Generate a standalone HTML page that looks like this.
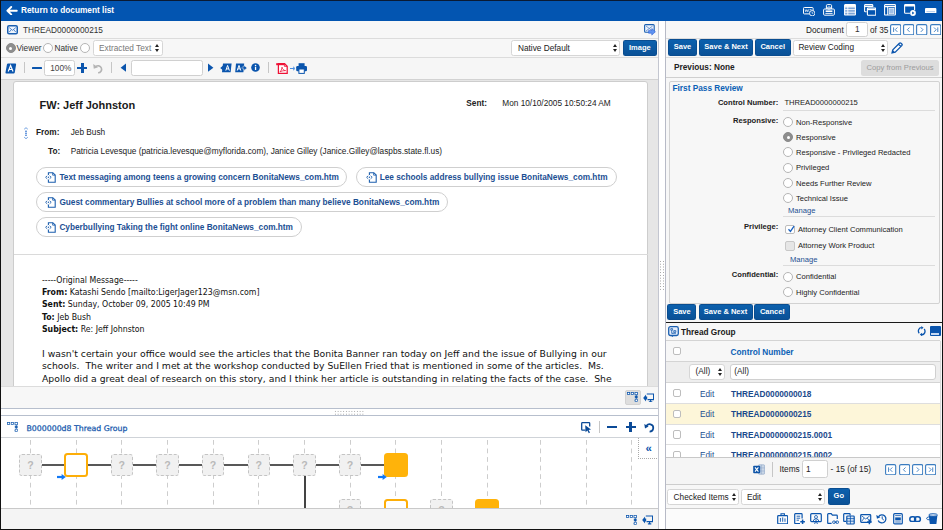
<!DOCTYPE html>
<html lang="en">
<head>
<meta charset="utf-8">
<title>Document Review</title>
<style>
*{box-sizing:border-box;margin:0;padding:0}
html,body{width:943px;height:530px;overflow:hidden;background:#f5f5f5}
body{font-family:"Liberation Sans",Arial,sans-serif;font-size:8.27px;color:#333;position:relative}
.abs{position:absolute}
#frame{position:absolute;left:0;top:0;width:943px;height:530px;overflow:hidden;background:#fff}
#topbar{left:0;top:0;width:943px;height:21px;background:#0355b1;border-top:1px solid #0a1a33}
#topbar .ttl{left:21px;top:4.2px;color:#fff;font-weight:bold;font-size:8.3px;white-space:nowrap}
.t{position:absolute;white-space:nowrap}
.btn{position:absolute;background:linear-gradient(#0c60ad,#0a5197);color:#fff;font-weight:bold;font-size:7.5px;text-align:center;border-radius:1.6px;border:1px solid #0a4d90;white-space:nowrap}
.sel{position:absolute;background:#fff;border:1px solid #d6d6d6;border-radius:2.5px;white-space:nowrap}
.inp{position:absolute;background:#fff;border:1px solid #d0d0d0;border-radius:2.5px}
.radio{position:absolute;width:10px;height:10px;border-radius:50%;border:1px solid #b5b5b5;background:#fff}
.radio.on{background:#8e8e8e;border-color:#8a8a8a}
.radio.on:after{content:"";position:absolute;left:2.5px;top:2.5px;width:3px;height:3px;border-radius:50%;background:#fff}
.cb{position:absolute;width:8.4px;height:8.4px;border:1px solid #bdbdbd;border-radius:2px;background:#fff}
.vsep{width:1px;background:#c6c6c6}
.upd{position:absolute;width:4.4px;height:8px}
.upd:before{content:"";position:absolute;left:0;top:0;border:2.2px solid transparent;border-bottom:3.3px solid #222;border-top:0}
.upd:after{content:"";position:absolute;left:0;top:4.5px;border:2.2px solid transparent;border-top:3.3px solid #222;border-bottom:0}
.b{font-weight:bold;color:#222}
.pill{position:absolute;height:20.2px;border:1px solid #cfcfcf;border-radius:10px;background:#fff;color:#1c4f93;font-weight:bold}
.om{position:absolute;white-space:nowrap;font-family:"DejaVu Sans Condensed","DejaVu Sans",sans-serif;font-size:8.7px;line-height:12.3px;color:#111}
.bd{position:absolute;white-space:nowrap;font-family:"DejaVu Sans",Verdana,sans-serif;font-size:9.29px;line-height:12.3px;color:#111}
.vd{position:absolute;top:24.7px;width:1px;height:72px;background-image:linear-gradient(#cdcdcd 55%,transparent 55%);background-size:1px 8.55px}
.nq{position:absolute;width:22.4px;height:22.4px;border:1px dashed #c4c4c4;border-radius:3px;background:#f1f1f1;color:#b9b9b9;font-weight:bold;font-size:10.6px;text-align:center;line-height:21px}
.no{position:absolute;width:23.8px;height:23.8px;border:2.2px solid #fdae08;border-radius:3.5px;background:#fff}
.nf{position:absolute;width:23.8px;height:23.8px;border-radius:3.5px;background:#ffb30a}
.f{font-size:7.6px}
</style>
</head>
<body>
<div id="frame">
<div id="topbar" class="abs"><svg class="abs" style="left:6.2px;top:4.8px" width="12" height="9.4" viewBox="0 0 12 9.4"><path d="M5.2 1 L1.4 4.7 L5.2 8.4 M1.4 4.7 H10.8" fill="none" stroke="#fff" stroke-width="1.9" stroke-linecap="round" stroke-linejoin="round"/></svg><div class="t ttl">Return to document list</div><svg class="abs" style="left:803.2px;top:6px" width="12" height="9" viewBox="0 0 12 9"><rect x=".5" y=".5" width="9.6" height="6.4" rx=".8" fill="none" stroke="#fff" stroke-width="1"/><path d="M2 2.4 L2.8 4.8 L3.8 2.6 L4.8 4.8 L5.6 2.4 M6.6 2.6 H8.6 M6.6 4.4 H8" fill="none" stroke="#fff" stroke-width=".7"/><circle cx="9.2" cy="6.2" r="2.7" fill="#0355b1" stroke="#fff" stroke-width=".9"/><path d="M9.2 4.8 V6.3 H10.3" fill="none" stroke="#fff" stroke-width=".7"/></svg><svg class="abs" style="left:823.2px;top:2.6px" width="12" height="12" viewBox="0 0 12 12"><path d="M3.4 5 V1.6 Q3.4 .6 4.4 .6 H7.6 Q8.6 .6 8.6 1.6 V5" fill="none" stroke="#fff" stroke-width="1"/><rect x=".6" y="5" width="10.8" height="6.2" rx="1" fill="none" stroke="#fff" stroke-width="1"/><path d="M2.4 9.4 H9.6 M4.8 3 H7.2 V5 H4.8Z" stroke="#fff" stroke-width=".9" fill="none"/><rect x="2.6" y="6.4" width="6.8" height="1.6" fill="#fff"/></svg><svg class="abs" style="left:844px;top:3.2px" width="12" height="12" viewBox="0 0 12 12"><rect x=".6" y=".6" width="10.8" height="10.4" rx=".6" fill="#7fa6d8" stroke="#fff" stroke-width="1.1"/><path d="M.6 3 H11.4 M.6 5.6 H11.4 M.6 8.2 H11.4 M3.8 .6 V11" stroke="#fff" stroke-width=".9"/><rect x="1" y="1" width="10" height="1.8" fill="#fff"/></svg><svg class="abs" style="left:863.8px;top:3.2px" width="12.4" height="12" viewBox="0 0 12.4 12"><path d="M2.6 7.8 H1.4 Q.6 7.8 .6 7 V1.4 Q.6 .6 1.4 .6 H8 Q8.8 .6 8.8 1.4 V3" fill="none" stroke="#fff" stroke-width="1.1"/><path d="M.6 2.4 H8.8" stroke="#fff" stroke-width="1.4"/><rect x="3.4" y="4" width="8.4" height="7.2" rx=".8" fill="#0355b1" stroke="#fff" stroke-width="1.1"/><path d="M3.4 5.4 H11.8" stroke="#fff" stroke-width="1.6"/></svg><svg class="abs" style="left:884px;top:3.2px" width="12" height="12" viewBox="0 0 12 12"><rect x=".6" y=".6" width="10.8" height="10.4" rx=".6" fill="none" stroke="#fff" stroke-width="1.1"/><path d="M.6 2.6 H11.4" stroke="#fff" stroke-width="1.3"/><path d="M3.6 2.6 V11" stroke="#fff" stroke-width=".9"/><rect x="5" y="4.4" width="5" height="5.4" fill="#9fbfe6" stroke="#fff" stroke-width=".7"/></svg><svg class="abs" style="left:904.4px;top:3.2px" width="12.4" height="12.4" viewBox="0 0 12.4 12.4"><path d="M6 9.2 H1.4 Q.6 9.2 .6 8.4 V1.4 Q.6 .6 1.4 .6 H9.8 Q10.6 .6 10.6 1.4 V6" fill="none" stroke="#fff" stroke-width="1.1"/><path d="M.6 1.6 H10.6" stroke="#fff" stroke-width="1.8"/><circle cx="9" cy="9" r="2.9" fill="#fff"/><path d="M8.2 7.6 L10.4 9 L8.2 10.4Z" fill="#0355b1"/></svg><svg class="abs" style="left:925.2px;top:6.6px" width="11.4" height="5.6" viewBox="0 0 11.4 5.6"><rect x="0" y="0" width="11.4" height="5.4" rx="1" fill="#fff"/><rect x="1.4" y="3" width="8.6" height="1.2" fill="#b9d0ee"/></svg></div>
<div id="left" class="abs" style="left:1px;top:21px;width:658px;height:508px;background:#f6f6f6;border-right:1px solid #c3c6d0">
  <div class="abs" style="left:0;top:0;width:657px;height:18px;border-bottom:1px solid #dcdcdc;background:#f7f7f7"></div>
  <svg class="abs" style="left:6px;top:4px" width="11" height="10" viewBox="0 0 11 10"><rect x="0.75" y="0.75" width="9.5" height="8.1" rx="1.3" fill="#eef4fc" stroke="#1a5fb0" stroke-width="1.5"/><path d="M2.2 2.6 L5.5 5.3 L8.8 2.6 M2.2 7.1 L4.4 4.6 M8.8 7.1 L6.6 4.6" fill="none" stroke="#3d78c4" stroke-width="0.9"/></svg>
  <div class="t" style="left:22px;top:4.7px;color:#333">THREAD0000000215</div>
  <svg class="abs" style="left:642.8px;top:3px" width="12" height="12" viewBox="0 0 12 12"><rect x="0.6" y="0.6" width="9.6" height="7.6" rx="1" fill="#eaf1fb" stroke="#1a5fb0" stroke-width="1.1"/><path d="M2 2 L8.6 7 M8.6 2 L2 7" stroke="#5a86c5" stroke-width="0.8" fill="none"/><path d="M4.6 6.4 h3.2 v-1.9 l3.6 3.3 l-3.6 3.3 v-1.9 h-3.2z" fill="#5f93f2" stroke="#2f62d4" stroke-width="0.6"/></svg>

  <div class="abs" style="left:0;top:18px;width:657px;height:19px;border-bottom:1px solid #dcdcdc;background:#f7f7f7"></div>
  <div class="radio on" style="left:4.5px;top:22.2px"></div>
  <div class="t" style="left:15.4px;top:23px">Viewer</div>
  <div class="radio" style="left:42.2px;top:22.2px"></div>
  <div class="t" style="left:53.5px;top:23px">Native</div>
  <div class="radio" style="left:79.2px;top:22.2px"></div>
  <div class="sel" style="left:92px;top:19.3px;width:70px;height:15.8px"><span class="t" style="left:5px;top:2.6px;color:#777">Extracted Text</span><span class="upd" style="right:2.4px;top:3.2px"></span></div>
  <div class="sel" style="left:510px;top:19.3px;width:109px;height:15.8px"><span class="t" style="left:6px;top:2.6px;color:#222">Native Default</span><span class="upd" style="right:2px;top:3.2px"></span></div>
  <div class="btn" style="left:622px;top:18.9px;width:33.6px;height:16.6px;line-height:14.6px">Image</div>

  <div class="abs" style="left:0;top:37px;width:657px;height:21.6px;border-bottom:1px solid #d2d2d2;background:#f6f6f6"></div>
  <svg class="abs" style="left:4.2px;top:42px" width="11.6" height="11" viewBox="0 0 12 11"><path d="M3.2 0.3 H10.6 Q11.7 0.3 11.5 1.4 L10.1 9.7 Q9.9 10.7 8.9 10.7 H1.4 Q0.3 10.7 0.5 9.6 L2 1.3 Q2.2 0.3 3.2 0.3 Z" fill="#0b55ad"/><path d="M3.3 8.6 L5.8 2.4 L8.3 8.6 M4.2 6.5 H7.4" fill="none" stroke="#fff" stroke-width="1.2"/></svg>
  <div class="abs vsep" style="left:23px;top:41.4px;height:10.4px"></div>
  <div class="abs" style="left:31px;top:45.5px;width:9.8px;height:2.9px;background:#0b55ad;border-radius:.5px"></div>
  <div class="inp" style="left:43.2px;top:39px;width:30.4px;height:15.6px"><span class="t" style="left:5px;top:3.2px;color:#444">100%</span></div>
  <div class="abs" style="left:76.4px;top:45.5px;width:10px;height:2.7px;background:#0b55ad"></div>
  <div class="abs" style="left:80.05px;top:41.85px;width:2.7px;height:10px;background:#0b55ad"></div>
  <svg class="abs" style="left:91.5px;top:41.8px" width="11" height="11" viewBox="0 0 10 10"><path d="M2.4 3.4 A3.2 3.2 0 1 1 4.6 8.9" fill="none" stroke="#b4b4b4" stroke-width="1.5"/><path d="M0.2 0.8 L0.7 5.2 L4.6 3.9 Z" fill="#b4b4b4"/></svg>
  <div class="abs vsep" style="left:109.5px;top:41.4px;height:10.4px"></div>
  <svg class="abs" style="left:119.3px;top:42.3px" width="7" height="9.4" viewBox="0 0 7 9"><path d="M6 0.4 V8.6 L0.6 4.5 Z" fill="#0b55ad"/></svg>
  <div class="inp" style="left:130px;top:39px;width:72.4px;height:15.6px"></div>
  <svg class="abs" style="left:206.4px;top:42.3px" width="7" height="9.4" viewBox="0 0 7 9"><path d="M1 0.4 V8.6 L6.4 4.5 Z" fill="#0b55ad"/></svg>
  <svg class="abs" style="left:219px;top:42px" width="12" height="10" viewBox="0 0 12 10"><path d="M3 0.6 H11.6 L10.6 9.2 H2 Z" fill="#0b55ad"/><path d="M0.2 4.9 L3.2 2.4 V4 H5 V5.8 H3.2 V7.4 Z" fill="#0b55ad"/><path d="M5.8 7.6 L7.6 2.4 L9.4 7.6 M6.4 5.9 H8.8" stroke="#fff" stroke-width="1" fill="none"/></svg>
  <svg class="abs" style="left:234px;top:42px" width="12" height="10" viewBox="0 0 12 10"><path d="M1 0.6 H9.2 L8.4 9.2 H0.2 Z" fill="#0b55ad"/><path d="M12 4.9 L9 2.4 V4 H7 V5.8 H9 V7.4 Z" fill="#0b55ad" stroke="#f6f6f6" stroke-width=".4"/><path d="M2.2 7.6 L4 2.4 L5.8 7.6 M2.8 5.9 H5.2" stroke="#fff" stroke-width="1" fill="none"/></svg>
  <svg class="abs" style="left:250px;top:42.3px" width="9" height="9" viewBox="0 0 9 9"><circle cx="4.5" cy="4.5" r="4.3" fill="#0b55ad"/><rect x="3.9" y="3.8" width="1.3" height="3.2" fill="#fff"/><circle cx="4.55" cy="2.5" r=".8" fill="#fff"/></svg>
  <div class="abs vsep" style="left:267.2px;top:41.4px;height:10.4px"></div>
  <svg class="abs" style="left:275px;top:42.2px" width="12" height="11" viewBox="0 0 12 11"><path d="M2.4 0.7 H8.6 L11.2 3.2 V10.3 H2.4 Z" fill="#fff" stroke="#ee1236" stroke-width="1.25"/><path d="M8.4 0.8 V3.4 H11" fill="none" stroke="#ee1236" stroke-width=".8"/><rect x="0.2" y="0.2" width="8" height="2" fill="#ee1236"/><path d="M4 8.8 C5.6 7 6.2 4.8 6 4.2 C6.2 6 7.8 7.6 9.6 7.6 C7.2 7.6 5 8.2 4 8.8Z" fill="none" stroke="#ee1236" stroke-width=".8"/></svg>
  <svg class="abs" style="left:288.6px;top:45.2px" width="6" height="5" viewBox="0 0 6 5"><path d="M0 2.5 H4 M3 0.8 L5 2.5 L3 4.2" fill="none" stroke="#4a8ee0" stroke-width="1"/></svg>
  <svg class="abs" style="left:295px;top:42.2px" width="11.2" height="11" viewBox="0 0 11.2 11"><rect x="2.6" y="0.2" width="6" height="3.2" fill="#0b55ad"/><rect x="0.2" y="3" width="10.8" height="5.2" rx="1.2" fill="#0b55ad"/><rect x="2.9" y="6" width="5.4" height="4.4" fill="#fff" stroke="#0b55ad" stroke-width="1"/></svg>

  <div class="abs" style="left:0;top:59px;width:657px;height:306px;background:#e6e6e6;overflow:hidden">
    <div id="page" class="abs" style="left:12.4px;top:1.4px;width:634.8px;height:320px;background:#fff;border:1px solid #cdcdcd;border-radius:3px 3px 0 0"><div class="abs" style="left:0.6px;top:0.6px;width:600px;height:300px">
      <div class="t" style="left:24.5px;top:16px;font-size:11px;font-weight:bold;color:#1a1a1a">FW: Jeff Johnston</div>
      <div class="t b" style="left:451.3px;top:16.5px">Sent:</div>
      <div class="t" style="left:487.3px;top:16.5px;color:#222">Mon 10/10/2005 10:50:24 AM</div>
      <svg class="abs" style="left:8px;top:44px" width="6" height="12.4" viewBox="0 0 6 12.4"><path d="M1.2 2.2 L3 0.7 L4.8 2.2 M1.2 10.2 L3 11.7 L4.8 10.2" fill="none" stroke="#4a86d8" stroke-width=".8"/><rect x="2.3" y="3.6" width="1.4" height="1.4" fill="#2f72d0"/><rect x="2.3" y="5.6" width="1.4" height="1.4" fill="#2f72d0"/><rect x="2.3" y="7.6" width="1.4" height="1.4" fill="#2f72d0"/></svg>
      <div class="t b" style="left:21px;top:45.2px">From:</div>
      <div class="t" style="left:55.7px;top:45.2px;color:#222">Jeb Bush</div>
      <div class="t b" style="left:33px;top:64.4px">To:</div>
      <div class="t" style="left:55.7px;top:64.4px;color:#222">Patricia Levesque (patricia.levesque@myflorida.com), Janice Gilley (Janice.Gilley@laspbs.state.fl.us)</div>
      <div class="pill" style="left:21px;top:84.2px;width:311.5px"><svg class="abs" style="left:8.4px;top:4.3px" width="11" height="11" viewBox="0 0 11 11"><path d="M3.4 3 V0.7 H7.8 L10.2 3 V10.3 H3.4 V7.6" fill="none" stroke="#1d5fae" stroke-width="1.1"/><path d="M7.6 0.8 V3.2 H10" fill="none" stroke="#1d5fae" stroke-width=".8"/><path d="M2.2 3.8 L0.6 5.3 L2.2 6.8 M4.6 3.8 L6.2 5.3 L4.6 6.8" fill="none" stroke="#1d5fae" stroke-width=".9"/><circle cx="3.4" cy="5.3" r=".7" fill="#1d5fae"/></svg><span class="t" style="left:22.4px;top:4.7px">Text messaging among teens a growing concern BonitaNews_com.htm</span></div>
      <div class="pill" style="left:341.3px;top:84.2px;width:260.5px"><svg class="abs" style="left:8.4px;top:4.3px" width="11" height="11" viewBox="0 0 11 11"><path d="M3.4 3 V0.7 H7.8 L10.2 3 V10.3 H3.4 V7.6" fill="none" stroke="#1d5fae" stroke-width="1.1"/><path d="M7.6 0.8 V3.2 H10" fill="none" stroke="#1d5fae" stroke-width=".8"/><path d="M2.2 3.8 L0.6 5.3 L2.2 6.8 M4.6 3.8 L6.2 5.3 L4.6 6.8" fill="none" stroke="#1d5fae" stroke-width=".9"/><circle cx="3.4" cy="5.3" r=".7" fill="#1d5fae"/></svg><span class="t" style="left:22.4px;top:4.7px">Lee schools address bullying issue BonitaNews_com.htm</span></div>
      <div class="pill" style="left:21px;top:109.2px;width:412px"><svg class="abs" style="left:8.4px;top:4.3px" width="11" height="11" viewBox="0 0 11 11"><path d="M3.4 3 V0.7 H7.8 L10.2 3 V10.3 H3.4 V7.6" fill="none" stroke="#1d5fae" stroke-width="1.1"/><path d="M7.6 0.8 V3.2 H10" fill="none" stroke="#1d5fae" stroke-width=".8"/><path d="M2.2 3.8 L0.6 5.3 L2.2 6.8 M4.6 3.8 L6.2 5.3 L4.6 6.8" fill="none" stroke="#1d5fae" stroke-width=".9"/><circle cx="3.4" cy="5.3" r=".7" fill="#1d5fae"/></svg><span class="t" style="left:22.4px;top:4.7px">Guest commentary Bullies at school more of a problem than many believe BonitaNews_com.htm</span></div>
      <div class="pill" style="left:21px;top:134.2px;width:266px"><svg class="abs" style="left:8.4px;top:4.3px" width="11" height="11" viewBox="0 0 11 11"><path d="M3.4 3 V0.7 H7.8 L10.2 3 V10.3 H3.4 V7.6" fill="none" stroke="#1d5fae" stroke-width="1.1"/><path d="M7.6 0.8 V3.2 H10" fill="none" stroke="#1d5fae" stroke-width=".8"/><path d="M2.2 3.8 L0.6 5.3 L2.2 6.8 M4.6 3.8 L6.2 5.3 L4.6 6.8" fill="none" stroke="#1d5fae" stroke-width=".9"/><circle cx="3.4" cy="5.3" r=".7" fill="#1d5fae"/></svg><span class="t" style="left:22.4px;top:4.7px">Cyberbullying Taking the fight online BonitaNews_com.htm</span></div>
      <div class="abs" style="left:-1px;top:171px;width:634px;height:1px;background:#dadada"></div>
      <div class="om" style="left:27px;top:190.7px">-----Original Message-----<br><b>From:</b> Katashi Sendo [mailto:LigerJager123@msn.com]<br><b>Sent:</b> Sunday, October 09, 2005 10:49 PM<br><b>To:</b> Jeb Bush<br><b>Subject:</b> Re: Jeff Johnston</div>
      <div class="bd" style="left:27px;top:265.1px">I wasn't certain your office would see the articles that the Bonita Banner ran today on Jeff and the issue of Bullying in our<br>schools.&nbsp; The writer and I met at the workshop conducted by SuEllen Fried that is mentioned in some of the articles.&nbsp; Ms.<br>Apollo did a great deal of research on this story, and I think her article is outstanding in relating the facts of the case.&nbsp; She<br>also did a terrific job of presenting the material so that parents can understand the warning signs.</div>
    </div></div>
  </div>
  <div class="abs" style="left:0;top:365px;width:657px;height:22.6px;background:#f7f7f7;border-top:1px solid #dcdcdc;border-bottom:1px solid #b7bfcd">
    <div class="abs" style="left:624.4px;top:3.2px;width:15.2px;height:14.4px;background:#dedede;border:1px solid #d2d2d2;border-radius:2px"></div>
    <svg class="abs" style="left:626.2px;top:5px" width="11.4" height="10.4" viewBox="0 0 12 11"><g fill="#fff" stroke="#0b55ad" stroke-width=".8"><rect x=".4" y=".5" width="2.4" height="2.2"/><rect x="4.4" y=".5" width="2.4" height="2.2"/><rect x="8.4" y=".5" width="2.8" height="2.4"/></g><path d="M9.8 3 V9.2 M9.8 5.2 H8 M9.8 9.2 H8" stroke="#0b55ad" stroke-width=".8" fill="none"/><rect x="8.6" y="4" width="2.6" height="2.4" fill="#0b55ad"/><rect x="8.6" y="7.6" width="2.6" height="2.6" fill="#fff" stroke="#0b55ad" stroke-width=".7"/></svg>
    <svg class="abs" style="left:641.5px;top:5.9px" width="11.4" height="9.6" viewBox="0 0 12 10"><path d="M4 1 H11.2 V7 H4.8" fill="none" stroke="#0b55ad" stroke-width="1.3"/><path d="M6.2 9.3 H9.8 M8 7 V9" stroke="#0b55ad" stroke-width="1.2"/><path d="M0.2 5.2 L3.2 1.6 V3.6 H4.4 V6.8 H3.2 V8.8 Z" fill="#0b55ad"/></svg>
  </div>
  <div class="abs" style="left:0;top:387.6px;width:657px;height:7px;background:#fff"><div class="abs" style="left:332.6px;top:1.2px;width:30.2px;height:5.6px;background-image:radial-gradient(circle,#a0a0a0 .55px,transparent .85px);background-size:2.75px 2.8px"></div></div>
  <div id="tg" class="abs" style="left:0;top:394px;width:657px;height:114px;background:#fff">
    <div class="abs" style="left:0;top:0.3px;width:657px;height:1px;background:#b7bfcd"></div>
    <svg class="abs" style="left:5.8px;top:6.5px" width="11.4" height="10.4" viewBox="0 0 12 11"><g fill="#fff" stroke="#1a5fb0" stroke-width=".8"><rect x=".4" y=".5" width="2.4" height="2.2"/><rect x="4.4" y=".5" width="2.4" height="2.2"/><rect x="8.4" y=".5" width="2.8" height="2.4"/></g><path d="M9.8 3 V9.2 M9.8 5.2 H8 M9.8 9.2 H8" stroke="#1a5fb0" stroke-width=".8" fill="none"/><rect x="8.6" y="4" width="2.6" height="2.4" fill="#1a5fb0"/><rect x="8.6" y="7.6" width="2.6" height="2.6" fill="#fff" stroke="#1a5fb0" stroke-width=".7"/></svg>
    <div class="t" style="left:25.5px;top:9px;font-family:'DejaVu Sans',sans-serif;font-size:7.8px;color:#1558ad;-webkit-text-stroke:.25px #1558ad">B000000d8 Thread Group</div>
    <svg class="abs" style="left:580px;top:6.5px" width="11" height="12" viewBox="0 0 11 12"><path d="M4.6 8.2 H1.4 Q.7 8.2 .7 7.5 V1.4 Q.7 .7 1.4 .7 H8 Q8.7 .7 8.7 1.4 V4.6" fill="none" stroke="#0b4a97" stroke-width="1.3"/><path d="M4.2 3.2 L10 7.6 L7.6 7.9 L9 10.6 L7.8 11.2 L6.4 8.5 L4.6 10.2 Z" fill="#0b4a97"/></svg>
    <div class="abs vsep" style="left:597.5px;top:6px;height:12px"></div>
    <div class="abs" style="left:605.8px;top:10.6px;width:10.2px;height:2.9px;background:#0b4a97"></div>
    <div class="abs" style="left:624.7px;top:10.6px;width:10.4px;height:2.9px;background:#0b4a97"></div>
    <div class="abs" style="left:628.45px;top:6.85px;width:2.9px;height:10.4px;background:#0b4a97"></div>
    <svg class="abs" style="left:642.5px;top:6.5px" width="11" height="11" viewBox="0 0 11 11"><path d="M2.2 4.4 A3.7 3.7 0 1 1 5.6 9.6" fill="none" stroke="#0b4a97" stroke-width="1.7"/><path d="M0.3 2 L1 6.4 L4.6 4.4 Z" fill="#0b4a97"/></svg>
    <div class="abs" style="left:0;top:21.5px;width:657px;height:1px;background:#cfd3d8"></div>
    <div class="abs" style="left:0;top:22.5px;width:657px;height:70.5px;overflow:hidden;background:#fff" id="vis">
      <div class="abs" style="left:0;top:-22.5px;width:657px;height:114px">
      <div class="vd" style="left:28.9px"></div><div class="vd" style="left:74.57px"></div><div class="vd" style="left:120.24px"></div><div class="vd" style="left:165.91px"></div><div class="vd" style="left:211.58px"></div><div class="vd" style="left:257.25px"></div><div class="vd" style="left:302.92px"></div><div class="vd" style="left:348.59px"></div><div class="vd" style="left:394.26px"></div><div class="vd" style="left:439.93px"></div><div class="vd" style="left:485.6px"></div><div class="vd" style="left:538.6px"></div><div class="vd" style="left:584.7px"></div><div class="vd" style="left:630.0px"></div>
      <div class="abs" style="left:40px;top:48.8px;width:354.76px;height:1.9px;background:#585858"></div>
      <div class="abs" style="left:302.52px;top:61px;width:2.2px;height:40px;background:#444"></div>
      <div class="nq" style="left:18.2px;top:38.8px">?</div><div class="no" style="left:63.17px;top:38.1px"></div><div class="nq" style="left:109.54px;top:38.8px">?</div><div class="nq" style="left:155.21px;top:38.8px">?</div><div class="nq" style="left:200.88px;top:38.8px">?</div><div class="nq" style="left:246.55px;top:38.8px">?</div><div class="nq" style="left:292.22px;top:38.8px">?</div><div class="nq" style="left:337.89px;top:38.8px">?</div><div class="nf" style="left:382.86px;top:38.1px"></div><div class="nq" style="left:337.89px;top:84.3px">?</div><div class="no" style="left:382.86px;top:83.6px"></div><div class="nq" style="left:429.23px;top:84.3px">?</div><div class="nf" style="left:474.2px;top:83.6px"></div>
      <svg class="abs" style="left:56.2px;top:58.6px" width="9" height="6" viewBox="0 0 9 6"><path d="M0 3 H5" stroke="#1278f5" stroke-width="2.2"/><path d="M4.6 0 L8.8 3 L4.6 6 Z" fill="#1278f5"/></svg>
      <svg class="abs" style="left:376.5px;top:58.8px" width="9" height="6" viewBox="0 0 9 6"><path d="M0 3 H5" stroke="#1278f5" stroke-width="2.2"/><path d="M4.6 0 L8.8 3 L4.6 6 Z" fill="#1278f5"/></svg>
      <div class="abs" style="left:637.2px;top:21px;width:21px;height:23px;border:1px dotted #aaa;background:#fff"></div>
      <div class="t" style="left:644.4px;top:26.7px;color:#0b55ad;font-weight:bold;font-size:11.5px">«</div>
      </div>
    </div>
    <div class="abs" style="left:0;top:93px;width:657px;height:21px;background:#f4f4f4;border-top:1px solid #c9c9c9">
      <svg class="abs" style="left:625px;top:5.5px" width="11.4" height="10.4" viewBox="0 0 12 11"><g fill="#fff" stroke="#0b55ad" stroke-width=".8"><rect x=".4" y=".5" width="2.4" height="2.2"/><rect x="4.4" y=".5" width="2.4" height="2.2"/><rect x="8.4" y=".5" width="2.8" height="2.4"/></g><path d="M9.8 3 V9.2 M9.8 5.2 H8 M9.8 9.2 H8" stroke="#0b55ad" stroke-width=".8" fill="none"/><rect x="8.6" y="4" width="2.6" height="2.4" fill="#0b55ad"/><rect x="8.6" y="7.6" width="2.6" height="2.6" fill="#fff" stroke="#0b55ad" stroke-width=".7"/></svg>
      <svg class="abs" style="left:640.5px;top:6px" width="11.4" height="9.6" viewBox="0 0 12 10"><path d="M4 1 H11.2 V7 H4.8" fill="none" stroke="#0b55ad" stroke-width="1.3"/><path d="M6.2 9.3 H9.8 M8 7 V9" stroke="#0b55ad" stroke-width="1.2"/><path d="M0.2 5.2 L3.2 1.6 V3.6 H4.4 V6.8 H3.2 V8.8 Z" fill="#0b55ad"/></svg>
    </div>
  </div>
</div>
<div class="abs" style="left:658.9px;top:260.1px;width:6px;height:30.8px;background-image:radial-gradient(circle,#a0a0a0 .55px,transparent .85px);background-size:3px 2.8px"></div>
<div id="right" class="abs" style="left:665px;top:21px;width:277px;height:508px;background:#f7f7f7;border-left:1px solid #b7bac6">
  <div class="t" style="left:140px;top:4.6px;color:#222">Document</div>
  <div class="inp" style="left:179.5px;top:1.3px;width:22px;height:15px"><span class="t" style="left:8.6px;top:2.2px;color:#333">1</span></div>
  <div class="t" style="left:204px;top:4.6px;color:#222">of 35</div>
  <svg class="abs" style="left:223.8px;top:2.6px" width="11.4" height="11.4" viewBox="0 0 11.4 11.4"><rect x=".6" y=".6" width="10.2" height="10.2" rx="1.4" fill="#fff" stroke="#3a7cc0" stroke-width="1.1"/><path d="M3.6 3.4 V8 M7.4 3.5 L5.2 5.7 L7.4 7.9" fill="none" stroke="#3a7cc0" stroke-width=".9"/></svg><svg class="abs" style="left:237px;top:2.6px" width="11.4" height="11.4" viewBox="0 0 11.4 11.4"><rect x=".6" y=".6" width="10.2" height="10.2" rx="1.4" fill="#fff" stroke="#3a7cc0" stroke-width="1.1"/><path d="M6.6 3.5 L4.4 5.7 L6.6 7.9" fill="none" stroke="#3a7cc0" stroke-width=".9"/></svg><svg class="abs" style="left:250.2px;top:2.6px" width="11.4" height="11.4" viewBox="0 0 11.4 11.4"><rect x=".6" y=".6" width="10.2" height="10.2" rx="1.4" fill="#fff" stroke="#3a7cc0" stroke-width="1.1"/><path d="M4.8 3.5 L7 5.7 L4.8 7.9" fill="none" stroke="#3a7cc0" stroke-width=".9"/></svg><svg class="abs" style="left:263.5px;top:2.6px" width="11.4" height="11.4" viewBox="0 0 11.4 11.4"><rect x=".6" y=".6" width="10.2" height="10.2" rx="1.4" fill="#fff" stroke="#3a7cc0" stroke-width="1.1"/><path d="M7.8 3.4 V8 M4 3.5 L6.2 5.7 L4 7.9" fill="none" stroke="#3a7cc0" stroke-width=".9"/></svg>
  <div class="abs" style="left:0;top:17px;width:276px;height:1px;background:#dcdcdc"></div>
  <div class="btn" style="left:2px;top:18.2px;width:29px;height:16.6px;line-height:14.6px">Save</div>
  <div class="btn" style="left:33px;top:18.2px;width:54px;height:16.6px;line-height:14.6px">Save &amp; Next</div>
  <div class="btn" style="left:88.8px;top:18.2px;width:35.8px;height:16.6px;line-height:14.6px">Cancel</div>
  <div class="sel" style="left:126.6px;top:19px;width:95.5px;height:15.5px"><span class="t" style="left:4.8px;top:2.2px;color:#222">Review Coding</span><span class="upd" style="right:1.8px;top:3.2px"></span></div>
  <svg class="abs" style="left:225px;top:21px" width="13" height="12" viewBox="0 0 13 12"><path d="M1 11 L1.8 7.8 L8.4 1.2 Q9.2 .4 10 1.2 L10.8 2 Q11.6 2.8 10.8 3.6 L4.2 10.2 Z M7.6 2.2 L9.8 4.4" fill="#fff" stroke="#0b55ad" stroke-width="1.25"/><path d="M1 11 L1.7 8 L4 10.3Z" fill="#0b55ad"/></svg>
  <div class="abs" style="left:0;top:36px;width:276px;height:1px;background:#dcdcdc"></div>
  <div class="t b" style="left:8px;top:41.8px">Previous: None</div>
  <div class="abs" style="left:195px;top:38.5px;width:78px;height:16.3px;background:#dddddd;border-radius:2.5px;color:#9c9c9c;text-align:center;line-height:16.3px;font-size:7.65px">Copy from Previous</div>
  <div class="abs" style="left:0;top:55.5px;width:276px;height:1px;background:#cfcfcf"></div>
  <div class="abs" style="left:3px;top:59.5px;width:270.5px;height:223px;border:1px solid #d2d2d2;border-radius:2px;background:#f7f7f7"></div>
  <div class="t" style="left:6.5px;top:62.6px;color:#0b61b5;font-weight:bold">First Pass Review</div>
  <div class="t b f" style="right:163.8px;top:77.2px">Control Number:</div>
  <div class="t f" style="left:118.4px;top:77.2px;color:#222">THREAD0000000215</div>
  <div class="abs" style="left:117px;top:89px;width:152px;height:1px;background:#dcdcdc"></div>
  <div class="t b f" style="right:163.8px;top:94.5px">Responsive:</div>
  <div class="radio" style="left:117px;top:96.2px"></div><div class="t f" style="left:130px;top:97.0px;color:#222">Non-Responsive</div>
  <div class="radio on" style="left:117px;top:111.3px"></div><div class="t f" style="left:130px;top:112.1px;color:#222">Responsive</div>
  <div class="radio" style="left:117px;top:126.3px"></div><div class="t f" style="left:130px;top:127.1px;color:#222">Responsive - Privileged Redacted</div>
  <div class="radio" style="left:117px;top:141.5px"></div><div class="t f" style="left:130px;top:142.3px;color:#222">Privileged</div>
  <div class="radio" style="left:117px;top:156.7px"></div><div class="t f" style="left:130px;top:157.5px;color:#222">Needs Further Review</div>
  <div class="radio" style="left:117px;top:171.8px"></div><div class="t f" style="left:130px;top:172.6px;color:#222">Technical Issue</div>
  <div class="t f" style="left:122px;top:184.5px;color:#1d4f91">Manage</div>
  <div class="abs" style="left:117px;top:195.3px;width:152px;height:1px;background:#dcdcdc"></div>
  <div class="t b f" style="right:163.8px;top:200.5px">Privilege:</div>
  <div class="cb" style="left:119.4px;top:203.6px;width:9.4px;height:9.4px"><svg class="abs" style="left:0.2px;top:-0.6px" width="8.6" height="8.6" viewBox="0 0 8 8"><path d="M1.4 4 L3.2 6 L6.6 1" fill="none" stroke="#1a62c0" stroke-width="1.2"/></svg></div>
  <div class="t f" style="left:132px;top:203.8px;color:#222">Attorney Client Communication</div>
  <div class="cb" style="left:119.4px;top:220.2px;width:9.4px;height:9.4px;background:#e6e6e6;border-color:#c8c8c8"></div>
  <div class="t f" style="left:132px;top:220.3px;color:#222">Attorney Work Product</div>
  <div class="t f" style="left:124px;top:233.5px;color:#1d4f91">Manage</div>
  <div class="abs" style="left:117px;top:243.5px;width:152px;height:1px;background:#dcdcdc"></div>
  <div class="t b f" style="right:163.8px;top:249.3px">Confidential:</div>
  <div class="radio" style="left:117px;top:250.5px"></div><div class="t f" style="left:130px;top:251.3px;color:#222">Confidential</div>
  <div class="radio" style="left:117px;top:265.7px"></div><div class="t f" style="left:130px;top:266.5px;color:#222">Highly Confidential</div>
  <div class="btn" style="left:1.4px;top:283px;width:29px;height:16px;line-height:14px">Save</div>
  <div class="btn" style="left:32.5px;top:283px;width:54px;height:16px;line-height:14px">Save &amp; Next</div>
  <div class="btn" style="left:88.3px;top:283px;width:35.8px;height:16px;line-height:14px">Cancel</div>
  <div class="abs" style="left:0;top:300.6px;width:276px;height:1.5px;background:#1a1a1a"></div>
  <div class="abs" style="left:0;top:302.1px;width:273.6px;height:18px;background:#f7f7f7;border-bottom:1px solid #d4d4d4"></div>
  <svg class="abs" style="left:2px;top:305px" width="11" height="11.4" viewBox="0 0 11 11.4"><rect x=".7" y=".7" width="9.6" height="8.8" rx="1.7" fill="#e6eefb" stroke="#1a5fb0" stroke-width="1.3"/><path d="M3 9.6 L4.4 11 L5.8 9.6Z" fill="#1a5fb0"/><path d="M2.8 2.6 h1.8 v1.6 h-1.8z M5.8 4.6 h2 v1.6 h-2z M3.7 4.2 V7.4 H5.8 M5.2 7.4 v-1 M6.4 7.8 l.6 -1.4 l.6 1.4" fill="none" stroke="#1a5fb0" stroke-width=".8"/></svg>
  <div class="t b" style="left:15px;top:306.5px;color:#1a1a1a">Thread Group</div>
  <svg class="abs" style="left:251px;top:305px" width="9.4" height="10.4" viewBox="0 0 10 10" preserveAspectRatio="none"><path d="M5 1.6 A3.2 3.2 0 0 0 2.4 7 M5 8.4 A3.2 3.2 0 0 0 7.6 3" fill="none" stroke="#0b55ad" stroke-width="1.4"/><path d="M4.6 0 L7 1.7 L4.6 3.4 Z M5.4 6.6 L3 8.3 L5.4 10 Z" fill="#0b55ad"/></svg>
  <div class="abs" style="left:263.5px;top:305.4px;width:11px;height:9.6px;background:#0b55ad;border-radius:1px"><div class="abs" style="left:1.7px;top:6.4px;width:7.8px;height:1.9px;background:#c4d8f2"></div></div>
  <div class="abs" style="left:0;top:320px;width:273.6px;height:20.9px;background:#f7f7f7;border-bottom:1px solid #d4d4d4"></div>
  <div class="cb" style="left:6.8px;top:326px"></div>
  <div class="t" style="left:64.6px;top:327.0px;color:#0b61b5;font-weight:bold">Control Number</div>
  <div class="abs" style="left:0;top:340.9px;width:273.6px;height:20.7px;background:#eeeeee;border-bottom:1px solid #d4d4d4"></div>
  <div class="sel" style="left:23px;top:342.5px;width:35.8px;height:16.6px;border-radius:3px"><span class="t" style="left:5.6px;top:2.7px;color:#222;font-size:8.27px">(All)</span><span class="upd" style="right:1.8px;top:3.8px"></span></div>
  <div class="inp" style="left:63.7px;top:342.5px;width:206.6px;height:16.6px;border-radius:3px"><span class="t" style="left:3.6px;top:2.7px;color:#222;font-size:8.27px">(All)</span></div>
  <div class="abs" style="left:0;top:361.6px;width:273.6px;height:21px;background:#fff;border-bottom:1px solid #dedede;overflow:hidden">
      <div class="cb" style="left:6.8px;top:6.5px"></div>
      <div class="t" style="left:34px;top:7.0px;color:#1d4f91">Edit</div>
      <div class="t" style="left:65px;top:7.0px;color:#1b4a8c;font-weight:bold">THREAD0000000018</div>
    </div>
  <div class="abs" style="left:0;top:382.6px;width:273.6px;height:21px;background:#fdf6d9;border-bottom:1px solid #dedede;overflow:hidden">
      <div class="cb" style="left:6.8px;top:6.0px"></div>
      <div class="t" style="left:34px;top:6.5px;color:#1d4f91">Edit</div>
      <div class="t" style="left:65px;top:6.5px;color:#1b4a8c;font-weight:bold">THREAD0000000215</div>
    </div>
  <div class="abs" style="left:0;top:403.6px;width:273.6px;height:20.6px;background:#fff;border-bottom:1px solid #dedede;overflow:hidden">
      <div class="cb" style="left:6.8px;top:5.8px"></div>
      <div class="t" style="left:34px;top:6.3px;color:#1d4f91">Edit</div>
      <div class="t" style="left:65px;top:6.3px;color:#1b4a8c;font-weight:bold">THREAD0000000215.0001</div>
    </div>
  <div class="abs" style="left:0;top:424.2px;width:273.6px;height:12.6px;background:#fff;border-bottom:1px solid #dedede;overflow:hidden">
      <div class="cb" style="left:6.8px;top:5.8px"></div>
      <div class="t" style="left:34px;top:6.3px;color:#1d4f91">Edit</div>
      <div class="t" style="left:65px;top:6.3px;color:#1b4a8c;font-weight:bold">THREAD0000000215.0002</div>
    </div>
  <div class="abs" style="left:0;top:435.9px;width:273.6px;height:27.9px;background:#f5f5f5;border-top:1px solid #c8c8c8;border-bottom:1px solid #cdcdcd"></div>
  <svg class="abs" style="left:87px;top:442.6px" width="12" height="11" viewBox="0 0 12 11"><rect x="5.4" y=".8" width="6.2" height="9.4" rx=".8" fill="#c9d6e6" stroke="#8aa3c4" stroke-width=".6"/><path d="M8.4 .8 V10.2 M5.4 3.9 H11.6 M5.4 7 H11.6" stroke="#8aa3c4" stroke-width=".5"/><rect x=".2" y="1.8" width="7" height="7.4" rx=".8" fill="#0f55a8"/><path d="M2 3.4 L5.4 7.6 M5.4 3.4 L2 7.6" stroke="#fff" stroke-width="1.1"/></svg>
  <div class="abs vsep" style="left:106.4px;top:440.5px;height:15px"></div>
  <div class="t" style="left:113.5px;top:444px;color:#222">Items</div>
  <div class="inp" style="left:135.7px;top:439.2px;width:26px;height:17.6px"><span class="t" style="left:3.4px;top:4px;color:#222">1</span></div>
  <div class="t" style="left:164.6px;top:444px;color:#222">- 15 (of 15)</div>
  <svg class="abs" style="left:219.3px;top:442.7px" width="11.3" height="11.3" viewBox="0 0 11.4 11.4"><rect x=".6" y=".6" width="10.2" height="10.2" rx="1.4" fill="#fff" stroke="#3a7cc0" stroke-width="1.1"/><path d="M3.6 3.4 V8 M7.4 3.5 L5.2 5.7 L7.4 7.9" fill="none" stroke="#3a7cc0" stroke-width=".9"/></svg><svg class="abs" style="left:232.6px;top:442.7px" width="11.3" height="11.3" viewBox="0 0 11.4 11.4"><rect x=".6" y=".6" width="10.2" height="10.2" rx="1.4" fill="#fff" stroke="#3a7cc0" stroke-width="1.1"/><path d="M6.6 3.5 L4.4 5.7 L6.6 7.9" fill="none" stroke="#3a7cc0" stroke-width=".9"/></svg><svg class="abs" style="left:245.9px;top:442.7px" width="11.3" height="11.3" viewBox="0 0 11.4 11.4"><rect x=".6" y=".6" width="10.2" height="10.2" rx="1.4" fill="#fff" stroke="#3a7cc0" stroke-width="1.1"/><path d="M4.8 3.5 L7 5.7 L4.8 7.9" fill="none" stroke="#3a7cc0" stroke-width=".9"/></svg><svg class="abs" style="left:259.2px;top:442.7px" width="11.3" height="11.3" viewBox="0 0 11.4 11.4"><rect x=".6" y=".6" width="10.2" height="10.2" rx="1.4" fill="#fff" stroke="#3a7cc0" stroke-width="1.1"/><path d="M7.8 3.4 V8 M4 3.5 L6.2 5.7 L4 7.9" fill="none" stroke="#3a7cc0" stroke-width=".9"/></svg>
  <div class="sel" style="left:1px;top:467.7px;width:72.4px;height:16px"><span class="t" style="left:5.6px;top:2.9px;color:#222">Checked Items</span><span class="upd" style="right:1.6px;top:3.4px"></span></div>
  <div class="sel" style="left:74.5px;top:467.7px;width:84.6px;height:16px"><span class="t" style="left:5.4px;top:2.9px;color:#222">Edit</span><span class="upd" style="right:2.2px;top:3.4px"></span></div>
  <div class="btn" style="left:161.6px;top:467.2px;width:22.4px;height:16.4px;line-height:14.4px">Go</div>
  <div class="abs" style="left:273.6px;top:320px;width:1px;height:143.6px;background:#d9d9d9"></div>
  <div class="abs" style="left:0;top:487.4px;width:276px;height:1px;background:#cdcdcd"></div>
  <div class="abs" style="left:0;top:488.4px;width:276px;height:19.6px;background:#fbfbfb"></div>
  <svg class="abs" style="left:111px;top:492px" width="11.4" height="11.4" viewBox="0 0 11.4 11.4"><rect x=".7" y="2.6" width="10" height="8.2" rx=".8" fill="none" stroke="#0b55ad" stroke-width="1.2"/><path d="M4 2.6 V.8 H7.4 V2.6" fill="none" stroke="#0b55ad" stroke-width="1.1"/><path d="M3.4 8.8 V5 M5.7 8.8 V4.4 M8 8.8 V5.4" stroke="#0b55ad" stroke-width=".9"/></svg><svg class="abs" style="left:127.8px;top:492px" width="11.4" height="11.4" viewBox="0 0 11.4 11.4"><path d="M6 10.6 H1.4 Q.7 10.6 .7 9.9 V1.4 Q.7 .7 1.4 .7 H7.4 Q8.1 .7 8.1 1.4 V5.6" fill="none" stroke="#0b55ad" stroke-width="1.2"/><path d="M2.6 3.2 H6.2 M2.6 5.2 H6.2 M2.6 7.2 H5" stroke="#0b55ad" stroke-width=".9"/><path d="M8.6 6.4 V11 M6.3 8.7 H10.9" stroke="#0b55ad" stroke-width="1.5"/></svg><svg class="abs" style="left:144px;top:492.4px" width="12" height="11.4" viewBox="0 0 12 11.4"><rect x=".7" y=".7" width="10.6" height="8" rx="1" fill="none" stroke="#0b55ad" stroke-width="1.2"/><circle cx="6" cy="4" r="1.5" fill="none" stroke="#0b55ad" stroke-width=".8"/><path d="M3 8.6 Q3.4 5.8 6 5.8 Q8.6 5.8 9 8.6 M4.6 11 L6 7.4 L7.4 11" fill="none" stroke="#0b55ad" stroke-width=".9"/></svg><svg class="abs" style="left:160.8px;top:492px" width="12.2" height="11.6" viewBox="0 0 12.2 11.6"><path d="M4.6 10.4 H1.4 Q.7 10.4 .7 9.7 V1.4 Q.7 .7 1.4 .7 H4.2 L5.4 2.2 H9.6 Q10.3 2.2 10.3 2.9 V6" fill="none" stroke="#0b55ad" stroke-width="1.2"/><rect x="5.6" y="8" width="2.8" height="2.4" rx="1.1" fill="none" stroke="#0b55ad" stroke-width=".9"/><rect x="8.8" y="8" width="2.8" height="2.4" rx="1.1" fill="none" stroke="#0b55ad" stroke-width=".9"/><path d="M7.4 9.2 H9.8" stroke="#0b55ad" stroke-width=".9"/></svg><svg class="abs" style="left:177.4px;top:492px" width="12" height="11.6" viewBox="0 0 12 11.6"><path d="M3 8.4 H1.4 Q.7 8.4 .7 7.7 V1.4 Q.7 .7 1.4 .7 H6.4 Q7.1 .7 7.1 1.4 V2.4" fill="none" stroke="#0b55ad" stroke-width="1.2"/><rect x="3.8" y="3" width="7.4" height="8" rx=".8" fill="#dbe7f6" stroke="#0b55ad" stroke-width="1.2"/><path d="M3.8 5.6 H11.2 M3.8 8.2 H11.2 M7.4 3 V11" stroke="#0b55ad" stroke-width=".8"/></svg><svg class="abs" style="left:194px;top:493px" width="12" height="10.6" viewBox="0 0 12 10.6"><rect x=".7" y=".7" width="10" height="7.6" rx=".8" fill="none" stroke="#0b55ad" stroke-width="1.2"/><path d="M1.6 1.8 L5.7 5 L9.8 1.8 M1.6 7.4 L4.2 4 M9.8 7.4 L7.2 4" fill="none" stroke="#0b55ad" stroke-width=".8"/><path d="M9.4 5.6 V10.2 M7.1 7.9 H11.7" stroke="#0b55ad" stroke-width="1.5"/></svg><svg class="abs" style="left:210.4px;top:492.4px" width="11.4" height="11" viewBox="0 0 11.4 11"><path d="M2.6 3.6 A4 4 0 1 1 2.2 7.4" fill="none" stroke="#0b55ad" stroke-width="1.3"/><path d="M.2 2 L1 5.8 L4.4 4.2Z" fill="#0b55ad"/><path d="M6.2 3.4 V5.8 L7.8 7" fill="none" stroke="#0b55ad" stroke-width="1"/></svg><svg class="abs" style="left:227.2px;top:492px" width="10" height="11.6" viewBox="0 0 10 11.6"><rect x=".7" y=".7" width="8.6" height="10.2" rx="1" fill="none" stroke="#0b55ad" stroke-width="1.2"/><rect x="2.2" y="4.4" width="5.6" height="3" fill="#0b55ad"/><path d="M2.2 2.6 H7.8 M2.2 9 H7.8" stroke="#0b55ad" stroke-width=".8"/></svg><svg class="abs" style="left:243.4px;top:495px" width="12.2" height="6.4" viewBox="0 0 12.2 6.4"><rect x=".8" y=".8" width="5.8" height="4.8" rx="2.4" fill="none" stroke="#0b55ad" stroke-width="1.5"/><rect x="5.6" y=".8" width="5.8" height="4.8" rx="2.4" fill="none" stroke="#0b55ad" stroke-width="1.5"/></svg><svg class="abs" style="left:260.2px;top:492px" width="12" height="11.6" viewBox="0 0 12 11.6"><path d="M2.8 2 H11.4 L10.4 11 H3.8 Z" fill="#0b55ad"/><ellipse cx="7.1" cy="2" rx="4.3" ry="1.3" fill="#dbe7f6" stroke="#0b55ad" stroke-width=".9"/><path d="M3.4 3.6 Q.2 4.4 .6 5.8 Q1 7 4 6.8" fill="none" stroke="#0b55ad" stroke-width=".9"/></svg>
</div>
<div class="abs" style="left:0;top:0;width:1px;height:530px;background:#111"></div>
<div class="abs" style="left:942px;top:0;width:1px;height:530px;background:#111"></div>
<div class="abs" style="left:0;top:529px;width:943px;height:1px;background:#111"></div>
</div>
</body>
</html>
